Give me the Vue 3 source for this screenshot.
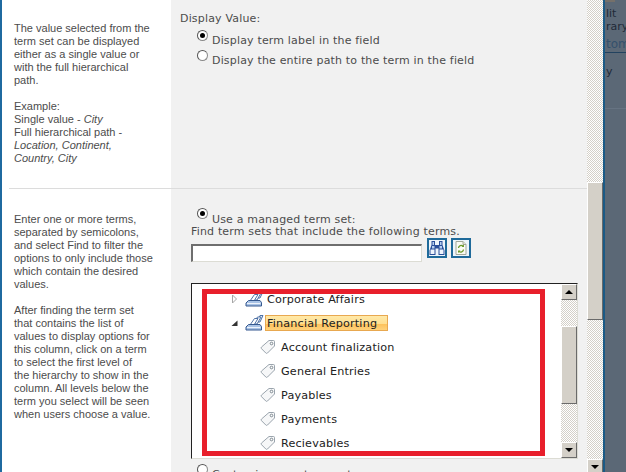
<script setup>
const terms = ['Account finalization', 'General Entries', 'Payables', 'Payments', 'Recievables']
</script>

<template>
  <div class="page">
    <div class="main">
      <section class="row first">
        <div class="help">
          <p>The value selected from the<br>term set can be displayed<br>either as a single value or<br>with the full hierarchical<br>path.</p>
          <p>Example:<br>Single value - <i>City</i><br>Full hierarchical path -<br><i>Location, Continent,<br>Country, City</i></p>
        </div>
        <div class="body">
          <div class="title">Display Value:</div>
          <label class="radio"><span class="dot on"></span>Display term label in the field</label>
          <label class="radio"><span class="dot"></span>Display the entire path to the term in the field</label>
        </div>
      </section>

      <section class="row second">
        <div class="help">
          <p>Enter one or more terms,<br>separated by semicolons,<br>and select Find to filter the<br>options to only include those<br>which contain the desired<br>values.</p>
          <p>After finding the term set<br>that contains the list of<br>values to display options for<br>this column, click on a term<br>to select the first level of<br>the hierarchy to show in the<br>column. All levels below the<br>term you select will be seen<br>when users choose a value.</p>
        </div>
        <div class="body">
          <label class="radio managed"><span class="dot on"></span>Use a managed term set:</label>
          <div class="find-label">Find term sets that include the following terms.</div>
          <div class="find">
            <div class="input"></div>
            <button class="icon-btn">
              <svg width="16" height="16" viewBox="0 0 16 16">
                <path d="M2.500 1h3.500v4h4V1h3.500v4l2 5.500V15H9.500V8.500h-3V15H.500v-4.500l2-5.500z" fill="#2a4f9a"/>
                <path d="M1.500 9.500h4v4.500h-4zM10.500 9.500h4v4.500h-4z" fill="#eef4fc"/>
                <path d="M3.500 2h1.500v3H3.500zM11 2h1.500v3H11zM3 6h2.500v2.500H3zM10.500 6H13v2.500h-2.500z" fill="#b6cff0"/>
              </svg>
            </button>
            <button class="icon-btn">
              <svg width="16" height="16" viewBox="0 0 16 16">
                <path d="M3 1.500h7l3 3v10H3z" fill="#fbfbf4" stroke="#a3a99a"/>
                <path d="M10 1.500v3h3" fill="#e6e6d8" stroke="#a3a99a"/>
                <path d="M5.500 8a2.700 2.700 0 0 1 4.600-1.800M10.500 9.500a2.700 2.700 0 0 1-4.600 1.800" fill="none" stroke="#6d9a2c" stroke-width="1.300"/>
                <path d="M11 4.500v2.500H8.500zM5 13v-2.500h2.500z" fill="#6d9a2c"/>
              </svg>
            </button>
          </div>

          <div class="tree-box">
            <div class="tree">
              <div class="tree-row">
                <svg class="arrow" width="7" height="10" viewBox="0 0 7 10"><path d="M1.500 1v8l4-4z" fill="#fff" stroke="#a6a6a6"/></svg>
                <svg class="set-icon" width="19" height="16" viewBox="0 0 19 16">
                  <path d="M11 7l4-6.500h3L15 7z" fill="#dfe8f5" stroke="#4f72a6"/>
                  <path d="M8 9l4.500-7h3.500l-4 7z" fill="#fff" stroke="#4f72a6"/>
                  <path d="M5 10l4.500-6.500H13L9 10z" fill="#fff" stroke="#4f72a6"/>
                  <path d="M3.500 9.500h11.500l1.500 2v3.500H1v-3z" fill="#a9c3e6" stroke="#36598f"/>
                  <path d="M2 12.500h13.500" stroke="#eef3fb"/>
                </svg>
                <span class="label">Corporate Affairs</span>
              </div>
              <div class="tree-row">
                <svg class="arrow" width="7" height="10" viewBox="0 0 7 10"><path d="M6.500 2.500v5.500H.500z" fill="#333"/></svg>
                <svg class="set-icon" width="19" height="16" viewBox="0 0 19 16">
                  <path d="M11 7l4-6.500h3L15 7z" fill="#dfe8f5" stroke="#4f72a6"/>
                  <path d="M8 9l4.500-7h3.500l-4 7z" fill="#fff" stroke="#4f72a6"/>
                  <path d="M5 10l4.500-6.500H13L9 10z" fill="#fff" stroke="#4f72a6"/>
                  <path d="M3.500 9.500h11.500l1.500 2v3.500H1v-3z" fill="#a9c3e6" stroke="#36598f"/>
                  <path d="M2 12.500h13.500" stroke="#eef3fb"/>
                </svg>
                <span class="label selected">Financial Reporting</span>
              </div>
              <div v-for="term in terms" :key="term" class="tree-row leaf">
                <svg class="tag" width="16" height="16" viewBox="0 0 16 16">
                  <path d="M9 1.500h4.500a1 1 0 0 1 1 1V7L7.500 14a1.200 1.200 0 0 1-1.700 0L1.500 9.700a1.200 1.200 0 0 1 0-1.700z" fill="#f6f7f8" stroke="#9aa4ad"/>
                  <circle cx="11.500" cy="4.500" r="1.300" fill="#fff" stroke="#7d8890"/>
                </svg>
                <span class="label">{{ term }}</span>
              </div>
              <div class="callout"></div>
            </div>
            <div class="scrollbar inner">
              <div class="btn up"></div>
              <div class="track short"></div>
              <div class="thumb"></div>
              <div class="track"></div>
              <div class="btn down"></div>
            </div>
          </div>
          <label class="radio managed custom"><span class="dot"></span>Customize your term set:</label>
        </div>
      </section>
    </div>

    <div class="scrollbar outer">
      <div class="track top"></div>
      <div class="thumb"></div>
      <div class="track"></div>
      <div class="btn down"></div>
    </div>

    <aside class="panel">
      <div class="cap"></div>
      <div class="link">lit</div>
      <div class="link">rary</div>
      <div class="tab">tom</div>
      <div class="link single">y</div>
      <div class="rule"></div>
    </aside>
  </div>
</template>

<style scoped>
.page {
  width: 626px;
  height: 472px;
  overflow: hidden;
  display: flex;
  background: #fff;
  color: #4c4c4c;
  font-family: "DejaVu Sans", Verdana, sans-serif;
}
.main {
  width: 587px;
  flex: none;
  border-left: 2px solid #1f6aa0;
  box-sizing: border-box;
  display: flex;
  flex-direction: column;
}
.row {
  display: flex;
  flex: none;
}
.first {
  height: 189px;
}
.second {
  flex: 1;
  min-height: 0;
}
.help {
  width: 169px;
  flex: none;
  box-sizing: border-box;
  padding: 22px 8px 0 12px;
  font: 11px/13px Tahoma, "Liberation Sans", sans-serif;
  color: #4c4c4c;
  position: relative;
  white-space: nowrap;
}
.help p {
  margin: 0 0 13px;
}
.first .help::after {
  content: "";
  position: absolute;
  left: 7px;
  right: 0;
  bottom: 0;
  height: 1px;
  background: #dcdcdc;
}
.second .help {
  padding-top: 24px;
}
.body {
  flex: 1;
  min-width: 0;
  background: #f1f1f1;
  font-size: 11px;
  line-height: 13px;
  letter-spacing: 0.17px;
}
.first .body {
  border-bottom: 1px solid #dcdcdc;
  padding-left: 9px;
  padding-top: 12px;
  box-sizing: border-box;
}
.second .body {
  padding-left: 20px;
  padding-top: 23px;
  height: 283px;
  overflow: hidden;
}
.title {
  margin-bottom: 8px;
  height: 13px;
}
.radio {
  display: flex;
  align-items: flex-start;
  white-space: nowrap;
  height: 20px;
  margin-left: 23px;
  line-height: 14px;
  padding-top: 1px;
  box-sizing: border-box;
}
.dot {
  width: 11px;
  height: 11px;
  flex: none;
  box-sizing: border-box;
  margin: -4px 4px 0 -6px;
  border-radius: 50%;
  background: #fff;
  border: 1px solid #8a8a8a;
  border-top-color: #555;
  border-left-color: #555;
  position: relative;
}
.dot.on::after {
  content: "";
  position: absolute;
  left: 2px;
  top: 2px;
  width: 5px;
  height: 5px;
  border-radius: 50%;
  background: #000;
}
.managed {
  margin-left: 12px;
  height: 14px;
}
.managed .dot {
  margin-top: -5px;
}
.custom {
  margin-top: 8px;
}
.custom .dot {
  margin-top: -4px;
}
.find-label {
  height: 12px;
  line-height: 12px;
  white-space: nowrap;
}
.find {
  display: flex;
  align-items: flex-start;
  gap: 4px;
  height: 45px;
}
.input {
  width: 231px;
  height: 18px;
  margin-top: 6px;
  box-sizing: border-box;
  background: #fff;
  border: 1px solid #dcdcd4;
  border-top: 2px solid #6e6e6e;
  border-left: 2px solid #6e6e6e;
}
.icon-btn {
  width: 20px;
  height: 20px;
  padding: 0;
  box-sizing: border-box;
  border: 2px solid #1f6a9a;
  background: #eef5fb;
  display: flex;
  align-items: center;
  justify-content: center;
}
.icon-btn svg {
  display: block;
}
.input + .icon-btn {
  margin-left: 1px;
}
.tree-box {
  width: 387px;
  height: 176px;
  box-sizing: border-box;
  border: 1px solid #dcdcd4;
  border-top: 1px solid #222;
  border-left: 1px solid #222;
  display: flex;
  background: #fff;
}
.tree {
  flex: 1;
  position: relative;
  overflow: hidden;
  padding-top: 3px;
}
.tree-row {
  display: flex;
  align-items: center;
  height: 24px;
  color: #222;
  font-size: 11.200px;
  white-space: nowrap;
  padding-left: 39px;
}
.arrow {
  width: 7px;
  margin-right: 7px;
  flex: none;
}
.set-icon {
  flex: none;
  margin-right: 2px;
}
.leaf {
  padding-left: 68px;
}
.tag {
  flex: none;
  margin-right: 4px;
}
.label {
  padding: 0 1px;
}
.selected {
  box-sizing: border-box;
  height: 16px;
  width: 123px;
  border: 1px solid #e8a850;
  padding: 0 0 0 1px;
  margin-left: -1px;
  line-height: 15px;
  background: linear-gradient(#ffe9a8 0, #ffdf90 55%, #fdc25c 60%, #ffd27a 100%);
}
.callout {
  position: absolute;
  left: 10px;
  top: 5px;
  width: 343px;
  height: 167px;
  box-sizing: border-box;
  border: 5px solid #e81f2b;
}
.scrollbar {
  flex: none;
  display: flex;
  flex-direction: column;
}
.inner {
  width: 16px;
}
.outer {
  width: 16px;
  height: 472px;
}
.track {
  flex: 1;
  background-color: #fff;
  background-image: repeating-conic-gradient(#d4d0c8 0 25%, #fff 0 50%);
  background-size: 2px 2px;
}
.track.short {
  flex: none;
  height: 26px;
}
.track.top {
  flex: none;
  height: 182px;
}
.thumb,
.btn {
  box-sizing: border-box;
  background: #d4d0c8;
  border: 1px solid #fff;
  border-right: 1px solid #6a6a6a;
  border-bottom: 1px solid #6a6a6a;
}
.inner .thumb {
  height: 78px;
}
.outer .thumb {
  height: 138px;
}
.btn {
  height: 16px;
  position: relative;
}
.btn::after {
  content: "";
  position: absolute;
  left: 3px;
  border-left: 4px solid transparent;
  border-right: 4px solid transparent;
}
.btn.up::after {
  top: 5px;
  border-bottom: 4px solid #000;
}
.btn.down::after {
  top: 5px;
  border-top: 4px solid #000;
}
.outer .btn {
  margin-bottom: -3px;
}
.panel {
  flex: 1;
  border-left: 2px solid #1b5a85;
  background: #5b6876;
  font-size: 11px;
  line-height: 13px;
  color: #1f2a38;
  overflow: hidden;
}
.cap {
  height: 2px;
  width: 10px;
  background: #75706a;
  margin-bottom: 5px;
}
.link {
  padding-left: 1px;
}
.tab {
  margin-top: 5px;
  height: 14px;
  padding-left: 1px;
  font-size: 12px;
  color: #34506c;
  border-bottom: 1px solid #22425f;
}
.single {
  margin-top: 12px;
}
.rule {
  height: 1px;
  background: #667382;
  margin-top: 30px;
}
</style>
